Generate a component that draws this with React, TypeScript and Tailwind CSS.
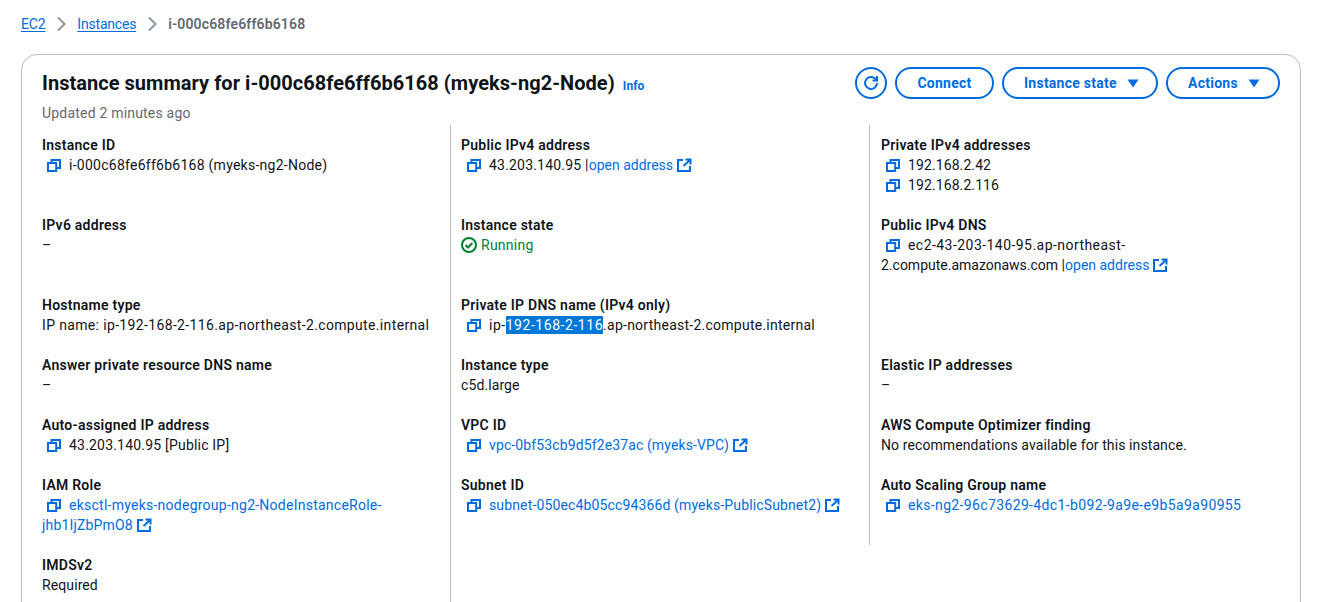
function CopyIcon() {
  return (
    <svg viewBox="0 0 16 16" className="w-4 h-4 shrink-0 text-[#006ce0]" fill="none" stroke="currentColor" strokeWidth="2">
      <path d="M2 6h8.2v8H2z" />
      <path d="M5.5 6V3H14v8h-3.8" />
    </svg>
  );
}

function ExternalIcon() {
  return (
    <svg viewBox="0 0 16 16" className="inline-block w-4 h-4 ml-[3px] align-[-3px] text-[#006ce0]" fill="none" stroke="currentColor" strokeWidth="2">
      <path d="M7 3H2v11h12V9" />
      <path d="M9.5 2.5h5v5M14 3 7.5 9" />
    </svg>
  );
}

function RefreshIcon() {
  return (
    <svg viewBox="0 0 16 16" className="w-4 h-4" fill="none" stroke="currentColor" strokeWidth="2">
      <path d="M14 8a6 6 0 1 1-2-4.5L14 5" />
      <path d="M14 1v4.5H9.5" />
    </svg>
  );
}

function Caret() {
  return (
    <svg viewBox="0 0 16 16" className="w-4 h-4 ml-2" fill="currentColor">
      <path d="M2.5 4.5h11L8 12.5z" />
    </svg>
  );
}

function Label({ children }: { children: React.ReactNode }) {
  return <div className="font-semibold tracking-[0.25px] text-[#0f141a]">{children}</div>;
}

function Copy({ children, middle }: { children: React.ReactNode; middle?: boolean }) {
  return (
    <div className="flex">
      <span className={middle ? "flex items-center ml-[5px] mr-[7px] h-5" : "flex items-center ml-[4px] mr-[7px] h-5"}>
        <CopyIcon />
      </span>
      <span>{children}</span>
    </div>
  );
}

function Link({ children }: { children: React.ReactNode }) {
  return <span className="text-[#006ce0] tracking-normal">{children}</span>;
}

function Field({ label, tall, children }: { label: string; tall?: boolean; children?: React.ReactNode }) {
  return (
    <div className={tall ? "h-20" : "h-[60px]"}>
      <Label>{label}</Label>
      {children}
    </div>
  );
}

export default function App() {
  return (
    <div
      className="h-[602px] overflow-hidden bg-white text-sm leading-5 tracking-[0.1px] text-[#0f141a] px-[21px] pt-[14px]"
      style={{ fontFamily: "Roboto, sans-serif" }}
    >
      {/* Breadcrumbs */}
      <nav className="flex items-center h-5 text-sm">
        <a className="text-[#006ce0] underline underline-offset-2 tracking-[-0.2px]">EC2</a>
        <svg viewBox="0 0 16 16" className="w-4 h-4 mx-2 text-[#8c96a5]" fill="none" stroke="currentColor" strokeWidth="2">
          <path d="m5 1.5 6.5 6.5L5 14.5" />
        </svg>
        <a className="text-[#006ce0] underline underline-offset-2 tracking-[-0.2px]">Instances</a>
        <svg viewBox="0 0 16 16" className="w-4 h-4 mx-2 text-[#8c96a5]" fill="none" stroke="currentColor" strokeWidth="2">
          <path d="m5 1.5 6.5 6.5L5 14.5" />
        </svg>
        <span className="font-semibold tracking-[0.15px] text-[#656871]">i-000c68fe6ff6b6168</span>
      </nav>

      {/* Card */}
      <div className="mt-5 w-[1280px] h-[700px] rounded-2xl border border-[#b6bec9] px-5 pt-[12px]">
        <div className="flex justify-between">
          <div>
            <div className="flex items-baseline pt-px">
              <h1 className="text-xl leading-[30px] font-bold tracking-[0.035px] text-[#0f141a]">
                Instance summary for i-000c68fe6ff6b6168 (myeks-ng2-Node)
              </h1>
              <a className="ml-2 text-xs font-bold text-[#006ce0]">Info</a>
            </div>
            <div className="mt-[5px] tracking-[0.2px] text-[#656871]">Updated 2 minutes ago</div>
          </div>
          <div className="flex items-start gap-2 font-bold tracking-[0.25px] text-[#006ce0]">
            <button className="flex items-center justify-center w-8 h-8 rounded-full border-2 border-[#006ce0]">
              <RefreshIcon />
            </button>
            <button className="h-8 w-[99px] rounded-full border-2 border-[#006ce0]">Connect</button>
            <button className="flex items-center pl-5 h-8 w-[156px] rounded-full border-2 border-[#006ce0]">
              Instance state
              <Caret />
            </button>
            <button className="flex items-center pl-5 h-8 w-[114px] rounded-full border-2 border-[#006ce0]">
              Actions
              <Caret />
            </button>
          </div>
        </div>

        <div className="flex items-start mt-[2px]">
          <div className="w-[409px] h-[600px] border-r border-[#b6bec9] pt-2.5 shrink-0">
            <Field label="Instance ID" tall>
              <Copy>
                <span className="tracking-[0.26px]">i-000c68fe6ff6b6168 (myeks-ng2-Node)</span>
              </Copy>
            </Field>
            <Field label="IPv6 address" tall>–</Field>
            <Field label="Hostname type">
              <span className="tracking-[0.35px]">IP name: ip-192-168-2-116.ap-northeast-2.compute.internal</span>
            </Field>
            <Field label="Answer private resource DNS name">–</Field>
            <Field label="Auto-assigned IP address">
              <Copy>
                <span className="tracking-[0.2px]">43.203.140.95 [Public IP]</span>
              </Copy>
            </Field>
            <Field label="IAM Role" tall>
              <div>
                <span className="inline-flex align-[-3px] ml-[4px] mr-[7px]">
                  <CopyIcon />
                </span>
                <span className="text-[#006ce0] tracking-[0.25px]">eksctl-myeks-nodegroup-ng2-NodeInstanceRole-</span>
                <br />
                <span className="text-[#006ce0] tracking-[0.17px]">jhb1IjZbPmO8</span>
                <ExternalIcon />
              </div>
            </Field>
            <Field label="IMDSv2">Required</Field>
          </div>

          <div className="w-[419px] h-[420px] border-r border-[#b6bec9] pt-2.5 pl-2.5 shrink-0">
            <Field label="Public IPv4 address" tall>
              <Copy middle>
                <span className="tracking-[0.2px]">43.203.140.95 |</span>
                <Link>open address</Link>
                <ExternalIcon />
              </Copy>
            </Field>
            <Field label="Instance state" tall>
              <div className="flex items-center text-[#00802f]">
                <svg viewBox="0 0 16 16" className="w-4 h-4 mr-1" fill="none" stroke="currentColor" strokeWidth="2">
                  <circle cx="8" cy="8" r="7" />
                  <path d="m4.5 8 2.5 2.5 4.5-4.5" />
                </svg>
                <span className="tracking-[0.25px]">Running</span>
              </div>
            </Field>
            <Field label="Private IP DNS name (IPv4 only)">
              <Copy middle>
                <span className="tracking-[0.5px]">ip-</span>
                <span className="bg-[#0078d7] text-white py-px tracking-[0.55px]">192-168-2-116</span>
                <span className="tracking-[0.25px]">.ap-northeast-2.compute.internal</span>
              </Copy>
            </Field>
            <Field label="Instance type">c5d.large</Field>
            <Field label="VPC ID">
              <Copy middle>
                <span className="text-[#006ce0] tracking-[0.12px]">vpc-0bf53cb9d5f2e37ac (myeks-VPC)</span>
                <ExternalIcon />
              </Copy>
            </Field>
            <Field label="Subnet ID">
              <Copy middle>
                <span className="text-[#006ce0] tracking-[0.14px]">subnet-050ec4b05cc94366d (myeks-PublicSubnet2)</span>
                <ExternalIcon />
              </Copy>
            </Field>
          </div>

          <div className="flex-1 pt-2.5 pl-[11px]">
            <Field label="Private IPv4 addresses" tall>
              <Copy>192.168.2.42</Copy>
              <Copy>192.168.2.116</Copy>
            </Field>
            <Field label="Public IPv4 DNS" tall>
              <div>
                <span className="inline-flex align-[-3px] ml-[4px] mr-[7px]">
                  <CopyIcon />
                </span>
                <span className="tracking-[0.45px]">ec2-43-203-140-95.ap-northeast-</span>
                <br />
                <span className="tracking-normal">2.compute.amazonaws.com |</span>
                <Link>open address</Link>
                <ExternalIcon />
              </div>
            </Field>
            <div className="h-[60px]" />
            <Field label="Elastic IP addresses">–</Field>
            <Field label="AWS Compute Optimizer finding">No recommendations available for this instance.</Field>
            <Field label="Auto Scaling Group name">
              <Copy>
                <span className="text-[#006ce0] tracking-[0.36px]">eks-ng2-96c73629-4dc1-b092-9a9e-e9b5a9a90955</span>
              </Copy>
            </Field>
          </div>
        </div>
      </div>
    </div>
  );
}
